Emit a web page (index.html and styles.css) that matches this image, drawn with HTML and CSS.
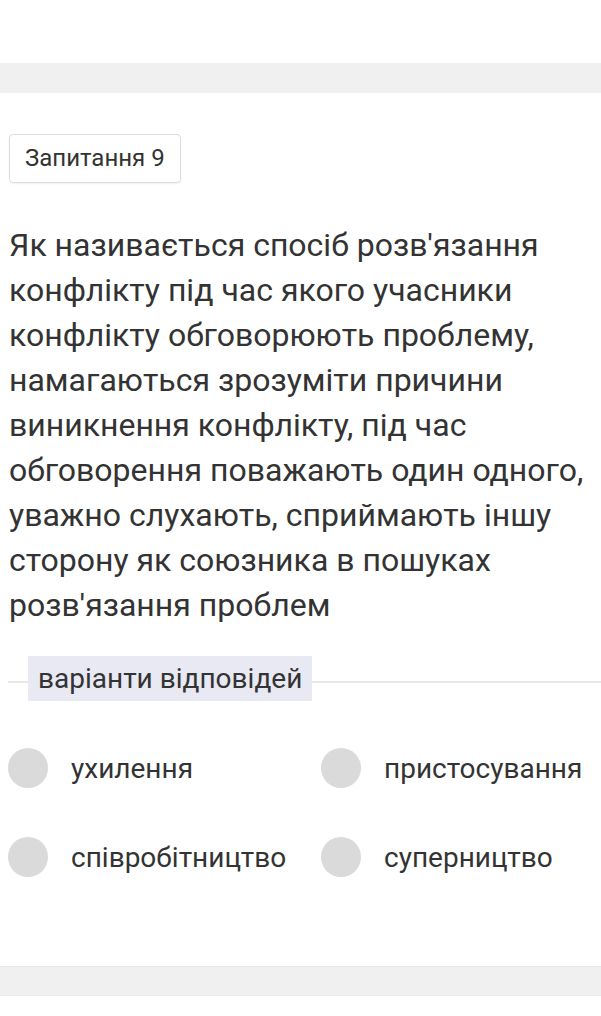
FILE: index.html
```html
<!DOCTYPE html>
<html lang="uk">
<head>
<meta charset="utf-8">
<link rel="stylesheet" href="styles.css">
</head>
<body>
<div class="top-space"></div>
<div class="band"></div>
<main class="content">
  <div class="qlabel">Запитання 9</div>
  <p class="question">Як називається спосіб розв'язання конфлікту під час якого учасники конфлікту обговорюють проблему, намагаються зрозуміти причини виникнення конфлікту, під час обговорення поважають один одного, уважно слухають, сприймають іншу сторону як союзника в пошуках розв'язання проблем</p>
  <div class="divider"><span class="divider-label">варіанти відповідей</span></div>
  <div class="options">
    <div class="option"><span class="radio"></span><span class="otext">ухилення</span></div>
    <div class="option"><span class="radio"></span><span class="otext">пристосування</span></div>
    <div class="option"><span class="radio"></span><span class="otext">співробітництво</span></div>
    <div class="option"><span class="radio"></span><span class="otext">суперництво</span></div>
  </div>
</main>
<div class="band bottom"></div>
</body>
</html>
```

FILE: styles.css
```css
* { box-sizing: border-box; }
html, body { margin: 0; padding: 0; background: #fff; }
body {
  font-family: Roboto, "Noto Sans", sans-serif;
  color: #333;
  width: 601px;
}
.top-space { height: 63px; }
.band { height: 30px; background: #f0f0f0; }
.band.bottom {
  height: 30px;
  border-top: 1px solid #e6e6e6;
  border-bottom: 1px solid #ebebeb;
}
.content { padding: 41px 0 0 9px; height: 873px; }
.qlabel {
  display: inline-block;
  border: 1px solid #ddd;
  border-radius: 4px;
  padding: 0 15px;
  height: 49px;
  line-height: 47px;
  font-size: 24px;
  color: #333;
  box-shadow: 0 1px 2px rgba(0,0,0,0.06);
}
.question {
  margin: 40px 0 0 0;
  font-size: 32px;
  line-height: 45px;
  color: #333;
  padding-right: 4px;
}
.divider {
  margin-top: 28px;
  position: relative;
  display: flex;
  align-items: center;
  height: 45px;
}
.divider::before {
  content: "";
  position: absolute;
  left: -1px;
  right: 0;
  top: 25px;
  height: 2px;
  background: #e8e8e8;
}
.divider-label {
  position: relative;
  margin-left: 19px;
  background: #e8e9f3;
  height: 45px;
  line-height: 45px;
  padding: 0 10px;
  font-size: 28px;
  color: #333;
}
.options {
  margin-top: 47px;
  display: grid;
  grid-template-columns: 313px 1fr;
  row-gap: 49px;
  margin-left: -1px;
}
.option { display: flex; align-items: center; height: 40px; }
.radio {
  width: 40px; height: 40px; border-radius: 50%;
  background: #dadada;
  flex: none;
}
.otext { margin-left: 23px; font-size: 28px; color: #333; white-space: nowrap; }
```
